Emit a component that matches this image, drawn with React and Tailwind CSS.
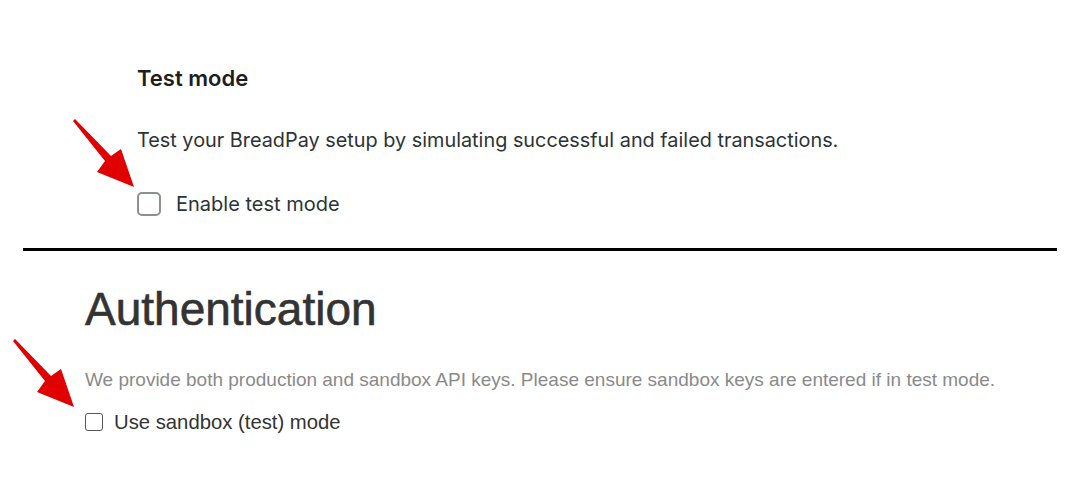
export default function App() {
  return (
    <div className="relative w-[1080px] h-[500px] bg-white overflow-hidden">
      <div className="pl-[137px] pt-[64px] font-['Inter',sans-serif] text-[#1e1e1e]">
        <h3 className="text-[22px] leading-[28px] font-semibold">Test mode</h3>
        <p className="mt-[34px] text-[19.85px] leading-[28px] text-[#2c3338]">
          Test your BreadPay setup by simulating successful and failed transactions.
        </p>
        <label className="mt-[36px] flex items-center gap-[15px]">
          <span className="w-[24px] h-[24px] rounded-[5px] border-2 border-[#8c8f94] bg-white shrink-0" />
          <span className="text-[20px] leading-[28px] text-[#2c3338]">Enable test mode</span>
        </label>
      </div>

      <div className="mt-[30px] mx-[23px] h-[3px] bg-black" />

      <div className="pl-[85px] pt-[33px] font-['Liberation_Sans',Arial,sans-serif]">
        <h2 className="text-[46px] leading-[50px] text-[#333] [-webkit-text-stroke:0.6px_#333]">Authentication</h2>
        <p className="mt-[34px] text-[19px] leading-[24px] text-[#8a8a8a]">
          We provide both production and sandbox API keys. Please ensure sandbox keys are entered if in test mode.
        </p>
        <label className="mt-[18px] flex items-center gap-[11px]">
          <span className="w-[18px] h-[18px] rounded-[3px] border border-[#555] bg-white shrink-0" />
          <span className="text-[20.3px] leading-[24px] text-[#333]">Use sandbox (test) mode</span>
        </label>
      </div>

      <svg className="absolute left-0 top-0 pointer-events-none" width="1080" height="500">
        <g fill="#e00000">
          <polygon points="73,121 75,119 111,156 121,149 134,187 97,172 105,161" />
          <polygon points="13,341 15,339 51,376 61,369 74,407 37,392 45,381" />
        </g>
      </svg>
    </div>
  );
}
